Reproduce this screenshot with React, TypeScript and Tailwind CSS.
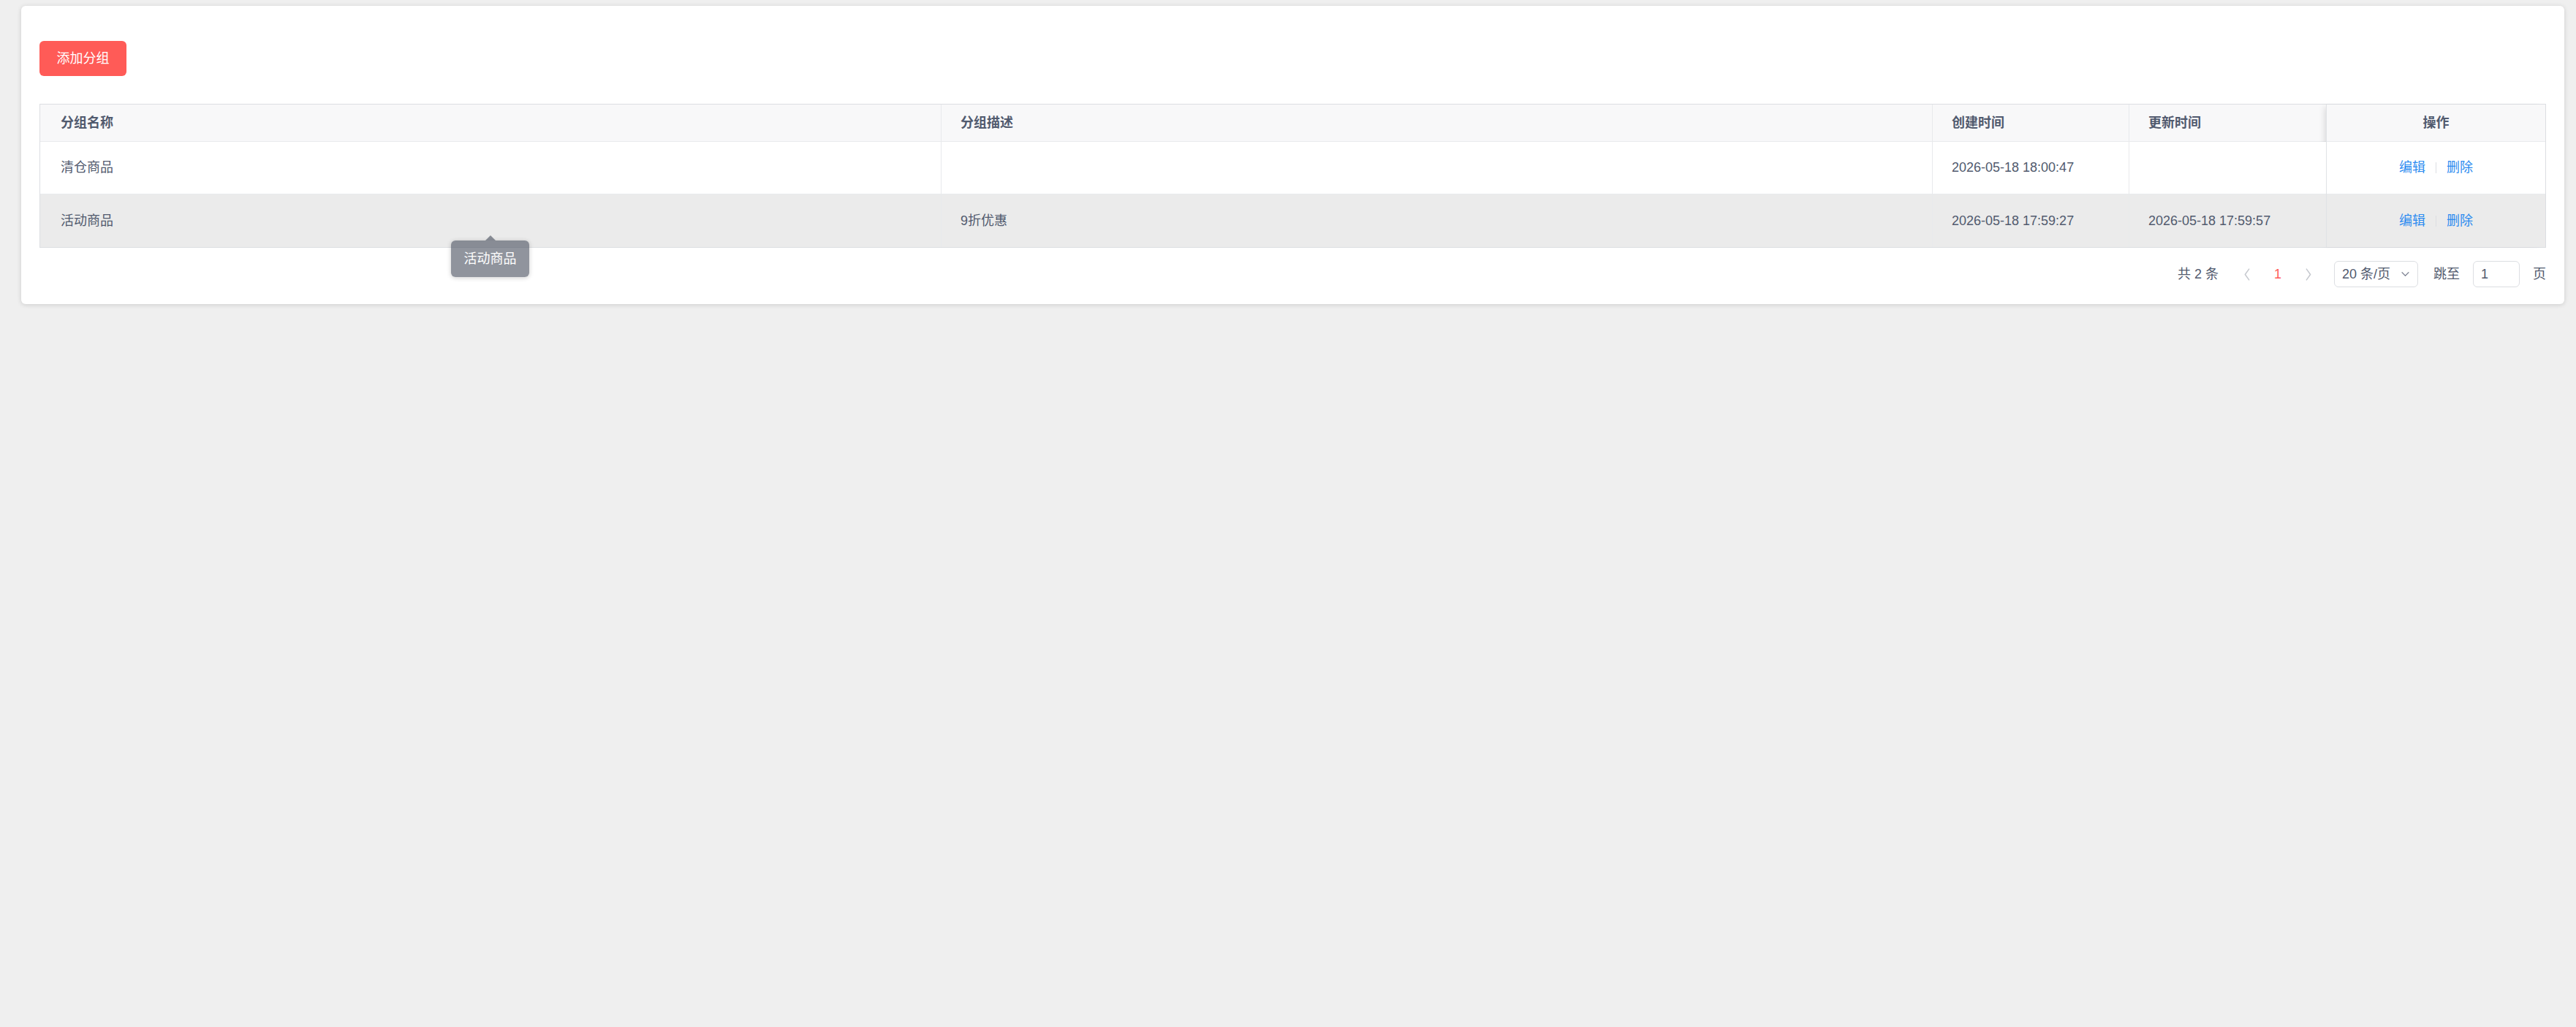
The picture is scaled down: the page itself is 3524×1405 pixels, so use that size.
import React from 'react';

// 商品分组列表页：顶部新增按钮 + 表格 + 分页
interface GroupRow {
  id: number;
  name: string;
  desc: string;
  createdAt: string;
  updatedAt: string;
}

const rows: GroupRow[] = [
  { id: 1, name: '清仓商品', desc: '', createdAt: '2026-05-18 18:00:47', updatedAt: '' },
  { id: 2, name: '活动商品', desc: '9折优惠', createdAt: '2026-05-18 17:59:27', updatedAt: '2026-05-18 17:59:57' },
];

const font = { fontFamily: '"Liberation Sans", "Noto Sans CJK SC", sans-serif' };

const Chevron: React.FC<{ dir: 'left' | 'right' | 'down'; className?: string }> = ({ dir, className }) => {
  const points =
    dir === 'left' ? '7,1 2,8 7,15' : dir === 'right' ? '2,1 7,8 2,15' : '1,2 6,7 11,2';
  const box = dir === 'down' ? '0 0 12 9' : '0 0 9 16';
  return (
    <svg viewBox={box} className={className} fill="none" stroke="currentColor" strokeWidth={1.4}>
      <polyline points={points} strokeLinecap="round" strokeLinejoin="round" />
    </svg>
  );
};

const Tooltip: React.FC<{ text: string }> = ({ text }) => (
  <div className="absolute left-[562px] top-[63px] z-10">
    <div className="absolute left-1/2 -top-[7px] -translate-x-1/2 w-0 h-0 border-l-[7px] border-r-[7px] border-b-[7px] border-l-transparent border-r-transparent border-b-[rgba(70,76,91,0.6)]"></div>
    <div className="w-[107px] h-[50px] rounded-[6px] bg-[rgba(70,76,91,0.6)] shadow-[0_1px_6px_rgba(0,0,0,0.2)] flex items-center justify-center text-white text-[18px]">
      {text}
    </div>
  </div>
);

const Pagination: React.FC = () => (
  <div className="flex items-center justify-end mt-[18px] text-[18px] text-[#515a6e]">
    <span>共 2 条</span>
    <div className="flex items-center ml-[18px]">
      <div className="w-[42px] h-[36px] flex items-center justify-center text-[#c5c8ce]">
        <Chevron dir="left" className="w-[10px] h-[17px]" />
      </div>
      <div className="w-[42px] h-[36px] flex items-center justify-center text-[#ff5b5b]">1</div>
      <div className="w-[42px] h-[36px] flex items-center justify-center text-[#c5c8ce]">
        <Chevron dir="right" className="w-[10px] h-[17px]" />
      </div>
    </div>
    <div className="ml-[14px] w-[115px] h-[36px] rounded-[6px] border border-[#dcdee2] flex items-center justify-between pl-[10px] pr-[11px]">
      <span>20 条/页</span>
      <Chevron dir="down" className="w-[11px] h-[8px] text-[#808695]" />
    </div>
    <span className="ml-[21px]">跳至</span>
    <div className="ml-[18px] w-[64px] h-[36px] rounded-[6px] border border-[#dcdee2] flex items-center pl-[10px]">1</div>
    <span className="ml-[18px]">页</span>
  </div>
);

export default function App() {
  return (
    <div className="min-h-screen bg-[#efefef] pt-[8px]" style={font}>
      <div className="ml-[29px] mr-[16px] rounded-[6px] bg-white shadow-[0_1px_6px_rgba(0,0,0,0.15)] px-[25px] pt-[48px] pb-[23px]">
        <button className="w-[119px] h-[48px] rounded-[6px] bg-[#ff5b57] text-white text-[18px]">添加分组</button>

        {/* 表格 */}
        <div className="mt-[38px] flex border border-[#dcdee2] text-[18px] text-[#515a6e]">
          <div className="flex-1 grid grid-cols-[1233px_1356px_269px_1fr]">
            {['分组名称', '分组描述', '创建时间', '更新时间'].map((h, i) => (
              <div
                key={h}
                className={`h-[51px] bg-[#f8f8f9] border-b border-[#e8eaec] flex items-center font-bold ${
                  i === 0 ? 'pl-[28px]' : 'pl-[26px]'
                } ${i < 3 ? 'border-r' : ''}`}
              >
                {h}
              </div>
            ))}
            {rows.map((r, ri) => {
              const bg = ri === 1 ? 'bg-[#ebebeb]' : 'bg-white';
              const cells = [r.name, r.desc, r.createdAt, r.updatedAt];
              return cells.map((c, ci) => (
                <div
                  key={`${r.id}-${ci}`}
                  className={`relative h-[72px] flex items-center ${bg} ${
                    ri === 0 ? 'border-b border-[#e8eaec]' : ''
                  } ${ci === 0 ? 'pl-[28px]' : 'pl-[26px]'} ${ci < 3 ? 'border-r border-[#e8eaec]' : ''}`}
                >
                  {c}
                  {ri === 1 && ci === 0 && <Tooltip text={r.name} />}
                </div>
              ));
            })}
          </div>

          {/* 右侧固定列 */}
          <div className="w-[300px] flex flex-col border-l border-[#e0e2e5] shadow-[-6px_0_8px_-4px_rgba(0,0,0,0.12)]">
            <div className="h-[51px] bg-[#f8f8f9] border-b border-[#e8eaec] flex items-center justify-center font-bold">
              操作
            </div>
            {rows.map((r, ri) => (
              <div
                key={r.id}
                className={`h-[72px] flex items-center justify-center ${ri === 1 ? 'bg-[#ebebeb]' : 'bg-white border-b border-[#e8eaec]'}`}
              >
                <a className="text-[#2d8cf0] cursor-pointer">编辑</a>
                <span className="mx-[14px] w-px h-[15px] bg-[#dcdee2]"></span>
                <a className="text-[#2d8cf0] cursor-pointer">删除</a>
              </div>
            ))}
          </div>
        </div>

        <Pagination />
      </div>
    </div>
  );
}
